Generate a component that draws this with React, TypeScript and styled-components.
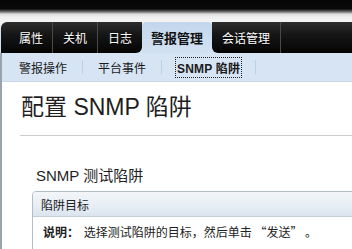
import React from 'react';
import styled, { createGlobalStyle } from 'styled-components';

const FONT = `"Liberation Sans", "Noto Sans CJK SC", sans-serif`;
const CJK_FONT = `"Noto Sans CJK SC", "Liberation Sans", sans-serif`;

const GlobalStyle = createGlobalStyle`
  html, body {
    margin: 0;
    padding: 0;
    background: #ffffff;
    overflow: hidden;
  }
  body {
    font-family: ${FONT};
    width: 352px;
    height: 249px;
  }
`;

const TABS = ['属性', '关机', '日志', '警报管理', '会话管理'];
const ACTIVE_TAB = 3;
const SUB_ITEMS = ['警报操作', '平台事件', 'SNMP 陷阱'];
const ACTIVE_SUB = 2;

export default function App() {
  return (
    <Page>
      <GlobalStyle />
      <TopStrip />
      <TabBar>
        {TABS.map((label, i) => (
          <Tab
            key={label}
            $active={i === ACTIVE_TAB}
            $first={i === 0}
            $beforeActive={i === ACTIVE_TAB - 1}
            $afterActive={i === ACTIVE_TAB + 1}
          >
            {label}
          </Tab>
        ))}
        <TabFiller />
      </TabBar>
      <Main>
        <SubNav>
          {SUB_ITEMS.map((label, i) => (
            <React.Fragment key={label}>
              <SubItem>
                <SubLabel $active={i === ACTIVE_SUB}>{label}</SubLabel>
              </SubItem>
              <SubSeparator />
            </React.Fragment>
          ))}
        </SubNav>
        <Content>
          <Heading>配置 SNMP 陷阱</Heading>
          <Rule />
          <Section>
            <SectionTitle>SNMP 测试陷阱</SectionTitle>
            <Panel>
              <PanelHeader>陷阱目标</PanelHeader>
              <PanelBody>
                <Strong>说明：</Strong> 选择测试陷阱的目标，然后单击 “发送” 。
              </PanelBody>
            </Panel>
          </Section>
        </Content>
      </Main>
    </Page>
  );
}

const Page = styled.div`
  width: 352px;
  height: 249px;
  overflow: hidden;
  display: flex;
  flex-direction: column;
`;

const TopStrip = styled.div`
  height: 22px;
  flex-shrink: 0;
  background: linear-gradient(
    #050505 0,
    #0a0a0a 9px,
    #7a7a7a 12px,
    #dcdcdc 14px,
    #efefef 17px,
    #f4f4f4 22px
  );
`;

const TabBar = styled.div`
  display: flex;
  height: 31px;
  flex-shrink: 0;
  padding-left: 1px;
  background: linear-gradient(#f2f2f2 0, #f2f2f2 5px, #d3e2f2 6px);
`;

const Tab = styled.div<{
  $active: boolean;
  $first: boolean;
  $beforeActive: boolean;
  $afterActive: boolean;
}>`
  display: flex;
  align-items: center;
  box-sizing: border-box;
  padding: ${(p) => (p.$first ? '0 9px 0 18px' : p.$active ? '0 9px' : '0 10px')};
  font-size: ${(p) => (p.$active ? '13px' : '12px')};
  font-weight: ${(p) => (p.$active ? 700 : 400)};
  color: ${(p) => (p.$active ? '#111111' : '#ffffff')};
  white-space: nowrap;
  background: ${(p) =>
    p.$active
      ? 'linear-gradient(#c2d6ec 0, #d3e2f2 100%)'
      : 'linear-gradient(#2e2e2e 0, #161616 40%, #050505 100%)'};
  border-right: ${(p) =>
    p.$active || p.$beforeActive ? 'none' : '1px solid #4a4a4a'};
  border-top-left-radius: ${(p) => (p.$first ? '6px' : p.$active ? '4px' : '0')};
  border-top-right-radius: ${(p) => (p.$active ? '4px' : '0')};
  border-bottom-right-radius: ${(p) => (p.$beforeActive ? '6px' : '0')};
  border-bottom-left-radius: ${(p) => (p.$afterActive ? '6px' : '0')};
  text-shadow: ${(p) => (p.$active ? 'none' : '0 1px 0 #000')};
`;

const TabFiller = styled.div`
  flex: 1;
  background: linear-gradient(#2e2e2e 0, #161616 40%, #050505 100%);
`;

const Main = styled.div`
  flex: 1;
  border-left: 2px solid #9aa3ad;
  display: flex;
  flex-direction: column;
`;

const SubNav = styled.div`
  display: flex;
  align-items: center;
  height: 28px;
  padding-left: 2px;
  background: #d6e4f3;
  border-bottom: 1px solid #c9d8e8;
`;

const SubItem = styled.div`
  display: flex;
  align-items: center;
  padding: 0 15px;
  font-size: 12px;
  color: #1a1a1a;
  white-space: nowrap;
`;

const SubLabel = styled.span<{ $active: boolean }>`
  font-weight: ${(p) => (p.$active ? 700 : 400)};
  outline: ${(p) => (p.$active ? '1px dotted #222' : 'none')};
  outline-offset: 1px;
  letter-spacing: ${(p) => (p.$active ? '0.2px' : '0')};
`;

const SubSeparator = styled.div`
  width: 1px;
  height: 14px;
  background: #bcd0e6;
`;

const Content = styled.div`
  flex: 1;
  background: #ffffff;
  padding-left: 18px;
`;

const Heading = styled.h1`
  margin: 10px 0 0 1px;
  font-size: 23px;
  line-height: 30px;
  font-weight: 400;
  color: #1e1e1e;
  white-space: nowrap;
`;

const Rule = styled.div`
  height: 1px;
  margin-top: 13px;
  margin-right: -10px;
  background: #cccccc;
`;

const Section = styled.div`
  margin: 30px -20px 0 12px;
`;

const SectionTitle = styled.div`
  padding-left: 4px;
  font-size: 15px;
  line-height: 20px;
  color: #1e1e1e;
  white-space: nowrap;
`;

const Panel = styled.div`
  margin-top: 5px;
  border: 1px solid #b4bdc7;
  border-top-left-radius: 4px;
  overflow: hidden;
`;

const PanelHeader = styled.div`
  height: 24px;
  display: flex;
  align-items: center;
  padding-left: 8px;
  font-size: 12px;
  color: #222222;
  background: linear-gradient(#f3f6f9 0, #e6edf4 60%, #dbe4ee 100%);
  border-bottom: 1px solid #c4ced9;
`;

const PanelBody = styled.div`
  padding: 5px 0 8px 10px;
  font-family: ${CJK_FONT};
  font-size: 12px;
  line-height: 20px;
  color: #222222;
  white-space: nowrap;
  background: #ffffff;
`;

const Strong = styled.span`
  font-weight: 700;
  margin-right: 2px;
`;
